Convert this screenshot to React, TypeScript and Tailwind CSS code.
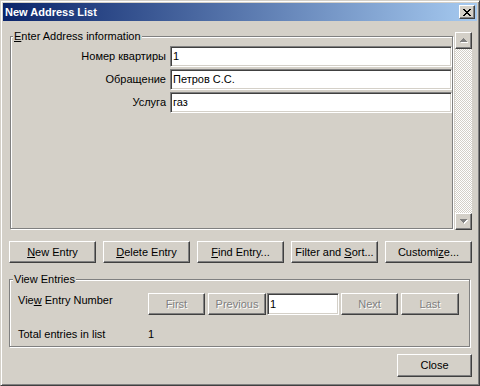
import React from "react"

const raised =
  "border border-t-white border-l-white border-r-[#404040] border-b-[#404040] shadow-[inset_-1px_-1px_#808080] bg-[#d4d0c8]"
const sunken =
  "border border-t-[#808080] border-l-[#808080] border-r-white border-b-white shadow-[inset_1px_1px_#404040,inset_-1px_-1px_#d4d0c8] bg-white"
const etched = "relative border border-[#808080] shadow-[1px_1px_0_#fff,inset_1px_1px_0_#fff]"
const disabledText = "text-[#808080] [text-shadow:1px_1px_0_#fff]"

function CloseGlyph() {
  return (
    <svg width="8" height="7" viewBox="0 0 8 7" shapeRendering="crispEdges">
      <path
        d="M0 0h2v1H0zM6 0h2v1H6zM1 1h2v1H1zM5 1h2v1H5zM2 2h4v1H2zM3 3h2v1H3zM2 4h4v1H2zM1 5h2v1H1zM5 5h2v1H5zM0 6h2v1H0zM6 6h2v1H6z"
        fill="#000"
      />
    </svg>
  )
}

function Arrow({ up }: { up: boolean }) {
  const d = up ? "M3 0h1v1H3zM2 1h3v1H2zM1 2h5v1H1zM0 3h7v1H0z" : "M0 0h7v1H0zM1 1h5v1H1zM2 2h3v1H2zM3 3h1v1H3z"
  return (
    <svg width="8" height="5" viewBox="0 0 8 5" shapeRendering="crispEdges">
      <path d={d} fill="#fff" transform="translate(1 1)" />
      <path d={d} fill="#808080" />
    </svg>
  )
}

function Field({ value, className }: { value: string; className: string }) {
  return (
    <div className={`${sunken} ${className} flex items-center pl-[2px] text-black leading-[13px]`}>{value}</div>
  )
}

function Btn({ children, className, disabled }: { children: React.ReactNode; className: string; disabled?: boolean }) {
  return (
    <div className={`${raised} ${className} flex items-center justify-center leading-[13px] ${disabled ? disabledText : "text-black"}`}>
      <span>{children}</span>
    </div>
  )
}

export default function App() {
  const rows = [
    { label: "Номер квартиры", value: "1" },
    { label: "Обращение", value: "Петров С.С." },
    { label: "Услуга", value: "газ" },
  ]

  return (
    <div className="w-[480px] h-[386px] bg-[#d4d0c8] border border-t-[#d4d0c8] border-l-[#d4d0c8] border-r-[#404040] border-b-[#404040] shadow-[inset_1px_1px_#fff,inset_-1px_-1px_#808080] p-[2px] font-['Liberation_Sans',Arial,sans-serif] text-[11px] text-black flex flex-col">
      {/* Title bar */}
      <div className="h-[18px] bg-[linear-gradient(to_right,#0a246a,#a6caf0)] flex items-center justify-between pl-[2px] pr-[2px]">
        <span className="text-white font-bold text-[11px] leading-[13px]">New Address List</span>
        <div className={`${raised} w-[16px] h-[14px] flex items-center justify-center`}>
          <CloseGlyph />
        </div>
      </div>

      {/* Address info + scrollbar */}
      <div className="mt-[11px] pl-[7px] flex">
        <div className={`${etched} mt-[4px] w-[443px] h-[193px]`}>
          <span className="absolute -top-[7px] left-[2px] bg-[#d4d0c8] px-[1px] leading-[13px]">
            <u>E</u>nter Address information
          </span>
          <div className="mt-[9px] flex flex-col gap-[2px]">
            {rows.map((r) => (
              <div key={r.label} className="flex items-center">
                <span className="w-[155px] text-right leading-[13px]">{r.label}</span>
                <Field value={r.value} className="ml-[4px] w-[282px] h-[21px]" />
              </div>
            ))}
          </div>
        </div>
        <div className="ml-[2px] w-[17px] h-[198px] flex flex-col bg-[repeating-conic-gradient(#d4d0c8_0_25%,#fff_0_50%)] bg-[length:2px_2px]">
          <div className={`${raised} h-[17px] flex items-center justify-center`}>
            <Arrow up />
          </div>
          <div className="flex-1" />
          <div className={`${raised} h-[17px] flex items-center justify-center`}>
            <Arrow up={false} />
          </div>
        </div>
      </div>

      {/* Action buttons */}
      <div className="mt-[11px] pl-[6px] flex gap-[7px]">
        <Btn className="w-[87px] h-[22px]">
          <u>N</u>ew Entry
        </Btn>
        <Btn className="w-[87px] h-[22px]">
          <u>D</u>elete Entry
        </Btn>
        <Btn className="w-[87px] h-[22px]">
          <u>F</u>ind Entry...
        </Btn>
        <Btn className="w-[87px] h-[22px]">
          Filter and <u>S</u>ort...
        </Btn>
        <Btn className="w-[87px] h-[22px]">
          Customi<u>z</u>e...
        </Btn>
      </div>

      {/* View entries */}
      <div className={`${etched} mt-[16px] ml-[6px] w-[461px] h-[68px]`}>
        <span className="absolute -top-[7px] left-[3px] bg-[#d4d0c8] px-[1px] leading-[13px]">View Entries</span>
        <div className="mt-[13px] pl-[8px] flex items-start">
          <span className="w-[130px] mt-[1px] leading-[13px]">
            Vie<u>w</u> Entry Number
          </span>
          <Btn disabled className="w-[57px] h-[22px]">First</Btn>
          <Btn disabled className="ml-[3px] w-[58px] h-[22px]">Previous</Btn>
          <Field value="1" className="ml-[1px] w-[72px] h-[22px]" />
          <Btn disabled className="ml-[2px] w-[57px] h-[22px]">Next</Btn>
          <Btn disabled className="ml-[3px] w-[58px] h-[22px]">Last</Btn>
        </div>
        <div className="mt-[13px] pl-[8px] flex leading-[13px]">
          <span className="w-[130px]">Total entries in list</span>
          <span>1</span>
        </div>
      </div>

      {/* Close */}
      <div className="mt-[7px] pr-[5px] flex justify-end">
        <Btn className="w-[75px] h-[23px]">Close</Btn>
      </div>
    </div>
  )
}
